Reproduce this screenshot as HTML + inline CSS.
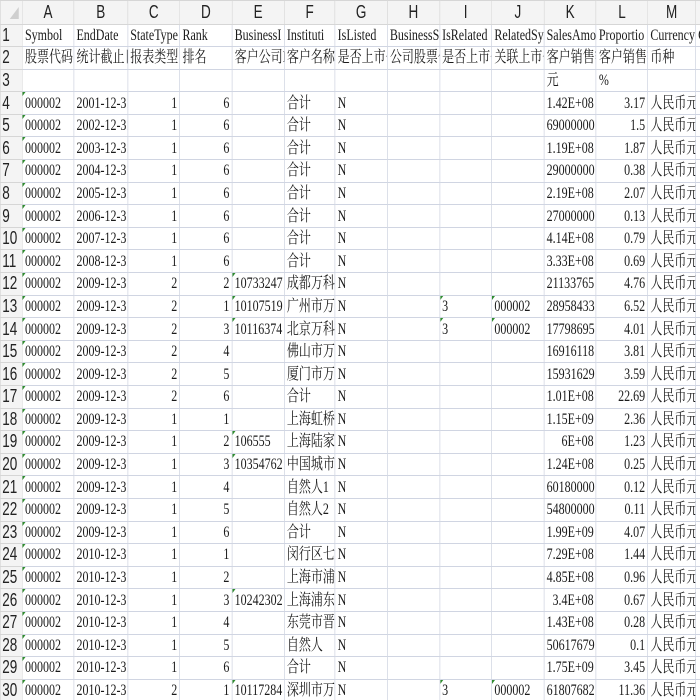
<!DOCTYPE html>
<html><head><meta charset="utf-8"><style>
html,body{margin:0;padding:0;background:#fff;width:700px;height:700px;overflow:hidden}
#w{width:940px;transform:scaleX(0.75);transform-origin:0 0}
table{border-collapse:collapse;table-layout:fixed;width:940px}
td{height:21.6px;padding:0 0 0 3px;border:1px solid #d0d5e2;white-space:nowrap;overflow:hidden;font-family:"Liberation Serif","Noto Serif CJK SC",serif;font-size:16px;line-height:21px;color:#1a1a1a;position:relative;vertical-align:middle}
td.r{text-align:right;padding:0 3px 0 0}
tr.h td{height:22.5px;background:#f4f4f4;border-color:#d6d6d6;text-align:center;font-family:"Liberation Sans","Noto Sans CJK SC",sans-serif;font-size:18px;color:#222;padding:0}
td.n{background:#f4f4f4;border-color:#d6d6d6;font-family:"Liberation Sans",sans-serif;font-size:18px;color:#222;padding:0 0 0 2px;text-align:left}
td.g::before{content:"";position:absolute;left:0;top:0;border-top:4px solid #2e8b2e;border-right:4px solid transparent}
.corner{position:absolute;left:12px;top:6px;width:0;height:0;border-left:12px solid transparent;border-bottom:12px solid #cfcfcf}
</style></head><body><div id="w"><table>
<colgroup><col style="width:29px"><col style="width:68px"><col style="width:71px"><col style="width:69px"><col style="width:69px"><col style="width:69px"><col style="width:67px"><col style="width:69px"><col style="width:69px"><col style="width:69px"><col style="width:69px"><col style="width:69px"><col style="width:68px"><col style="width:63px"><col style="width:12px"></colgroup>
<tr class="h"><td style="position:relative"><div class="corner"></div></td><td>A</td><td>B</td><td>C</td><td>D</td><td>E</td><td>F</td><td>G</td><td>H</td><td>I</td><td>J</td><td>K</td><td>L</td><td>M</td><td></td></tr>
<tr><td class="n">1</td><td>Symbol</td><td>EndDate</td><td>StateType</td><td>Rank</td><td>BusinessI</td><td>Instituti</td><td>IsListed</td><td>BusinessS</td><td>IsRelated</td><td>RelatedSy</td><td>SalesAmou</td><td>Proportio</td><td>CurrencyCo</td><td>Co</td></tr>
<tr><td class="n">2</td><td>股票代码</td><td>统计截止日</td><td>报表类型</td><td>排名</td><td>客户公司ID</td><td>客户名称</td><td>是否上市公</td><td>公司股票代</td><td>是否上市公</td><td>关联上市公</td><td>客户销售额</td><td>客户销售额</td><td>币种</td><td></td></tr>
<tr><td class="n">3</td><td></td><td></td><td></td><td></td><td></td><td></td><td></td><td></td><td></td><td></td><td>元</td><td>%</td><td></td><td></td></tr>
<tr><td class="n">4</td><td class="g">000002</td><td>2001-12-31</td><td class="r">1</td><td class="r">6</td><td></td><td>合计</td><td>N</td><td></td><td></td><td></td><td>1.42E+08</td><td class="r">3.17</td><td>人民币元</td><td></td></tr>
<tr><td class="n">5</td><td class="g">000002</td><td>2002-12-31</td><td class="r">1</td><td class="r">6</td><td></td><td>合计</td><td>N</td><td></td><td></td><td></td><td>69000000</td><td class="r">1.5</td><td>人民币元</td><td></td></tr>
<tr><td class="n">6</td><td class="g">000002</td><td>2003-12-31</td><td class="r">1</td><td class="r">6</td><td></td><td>合计</td><td>N</td><td></td><td></td><td></td><td>1.19E+08</td><td class="r">1.87</td><td>人民币元</td><td></td></tr>
<tr><td class="n">7</td><td class="g">000002</td><td>2004-12-31</td><td class="r">1</td><td class="r">6</td><td></td><td>合计</td><td>N</td><td></td><td></td><td></td><td>29000000</td><td class="r">0.38</td><td>人民币元</td><td></td></tr>
<tr><td class="n">8</td><td class="g">000002</td><td>2005-12-31</td><td class="r">1</td><td class="r">6</td><td></td><td>合计</td><td>N</td><td></td><td></td><td></td><td>2.19E+08</td><td class="r">2.07</td><td>人民币元</td><td></td></tr>
<tr><td class="n">9</td><td class="g">000002</td><td>2006-12-31</td><td class="r">1</td><td class="r">6</td><td></td><td>合计</td><td>N</td><td></td><td></td><td></td><td>27000000</td><td class="r">0.13</td><td>人民币元</td><td></td></tr>
<tr><td class="n">10</td><td class="g">000002</td><td>2007-12-31</td><td class="r">1</td><td class="r">6</td><td></td><td>合计</td><td>N</td><td></td><td></td><td></td><td>4.14E+08</td><td class="r">0.79</td><td>人民币元</td><td></td></tr>
<tr><td class="n">11</td><td class="g">000002</td><td>2008-12-31</td><td class="r">1</td><td class="r">6</td><td></td><td>合计</td><td>N</td><td></td><td></td><td></td><td>3.33E+08</td><td class="r">0.69</td><td>人民币元</td><td></td></tr>
<tr><td class="n">12</td><td class="g">000002</td><td>2009-12-31</td><td class="r">2</td><td class="r">2</td><td class="g">10733247</td><td>成都万科房</td><td>N</td><td></td><td></td><td></td><td>21133765</td><td class="r">4.76</td><td>人民币元</td><td></td></tr>
<tr><td class="n">13</td><td class="g">000002</td><td>2009-12-31</td><td class="r">2</td><td class="r">1</td><td class="g">10107519</td><td>广州市万科</td><td>N</td><td></td><td class="g">3</td><td class="g">000002</td><td>28958433</td><td class="r">6.52</td><td>人民币元</td><td></td></tr>
<tr><td class="n">14</td><td class="g">000002</td><td>2009-12-31</td><td class="r">2</td><td class="r">3</td><td class="g">10116374</td><td>北京万科企</td><td>N</td><td></td><td class="g">3</td><td class="g">000002</td><td>17798695</td><td class="r">4.01</td><td>人民币元</td><td></td></tr>
<tr><td class="n">15</td><td class="g">000002</td><td>2009-12-31</td><td class="r">2</td><td class="r">4</td><td></td><td>佛山市万科</td><td>N</td><td></td><td></td><td></td><td>16916118</td><td class="r">3.81</td><td>人民币元</td><td></td></tr>
<tr><td class="n">16</td><td class="g">000002</td><td>2009-12-31</td><td class="r">2</td><td class="r">5</td><td></td><td>厦门市万科</td><td>N</td><td></td><td></td><td></td><td>15931629</td><td class="r">3.59</td><td>人民币元</td><td></td></tr>
<tr><td class="n">17</td><td class="g">000002</td><td>2009-12-31</td><td class="r">2</td><td class="r">6</td><td></td><td>合计</td><td>N</td><td></td><td></td><td></td><td>1.01E+08</td><td class="r">22.69</td><td>人民币元</td><td></td></tr>
<tr><td class="n">18</td><td class="g">000002</td><td>2009-12-31</td><td class="r">1</td><td class="r">1</td><td></td><td>上海虹桥经</td><td>N</td><td></td><td></td><td></td><td>1.15E+09</td><td class="r">2.36</td><td>人民币元</td><td></td></tr>
<tr><td class="n">19</td><td class="g">000002</td><td>2009-12-31</td><td class="r">1</td><td class="r">2</td><td class="g">106555</td><td>上海陆家嘴</td><td>N</td><td></td><td></td><td></td><td class="r">6E+08</td><td class="r">1.23</td><td>人民币元</td><td></td></tr>
<tr><td class="n">20</td><td class="g">000002</td><td>2009-12-31</td><td class="r">1</td><td class="r">3</td><td class="g">10354762</td><td>中国城市建</td><td>N</td><td></td><td></td><td></td><td>1.24E+08</td><td class="r">0.25</td><td>人民币元</td><td></td></tr>
<tr><td class="n">21</td><td class="g">000002</td><td>2009-12-31</td><td class="r">1</td><td class="r">4</td><td></td><td>自然人1</td><td>N</td><td></td><td></td><td></td><td>60180000</td><td class="r">0.12</td><td>人民币元</td><td></td></tr>
<tr><td class="n">22</td><td class="g">000002</td><td>2009-12-31</td><td class="r">1</td><td class="r">5</td><td></td><td>自然人2</td><td>N</td><td></td><td></td><td></td><td>54800000</td><td class="r">0.11</td><td>人民币元</td><td></td></tr>
<tr><td class="n">23</td><td class="g">000002</td><td>2009-12-31</td><td class="r">1</td><td class="r">6</td><td></td><td>合计</td><td>N</td><td></td><td></td><td></td><td>1.99E+09</td><td class="r">4.07</td><td>人民币元</td><td></td></tr>
<tr><td class="n">24</td><td class="g">000002</td><td>2010-12-31</td><td class="r">1</td><td class="r">1</td><td></td><td>闵行区七宝</td><td>N</td><td></td><td></td><td></td><td>7.29E+08</td><td class="r">1.44</td><td>人民币元</td><td></td></tr>
<tr><td class="n">25</td><td class="g">000002</td><td>2010-12-31</td><td class="r">1</td><td class="r">2</td><td></td><td>上海市浦东</td><td>N</td><td></td><td></td><td></td><td>4.85E+08</td><td class="r">0.96</td><td>人民币元</td><td></td></tr>
<tr><td class="n">26</td><td class="g">000002</td><td>2010-12-31</td><td class="r">1</td><td class="r">3</td><td class="g">10242302</td><td>上海浦东新</td><td>N</td><td></td><td></td><td></td><td class="r">3.4E+08</td><td class="r">0.67</td><td>人民币元</td><td></td></tr>
<tr><td class="n">27</td><td class="g">000002</td><td>2010-12-31</td><td class="r">1</td><td class="r">4</td><td></td><td>东莞市晋杰</td><td>N</td><td></td><td></td><td></td><td>1.43E+08</td><td class="r">0.28</td><td>人民币元</td><td></td></tr>
<tr><td class="n">28</td><td class="g">000002</td><td>2010-12-31</td><td class="r">1</td><td class="r">5</td><td></td><td>自然人</td><td>N</td><td></td><td></td><td></td><td>50617679</td><td class="r">0.1</td><td>人民币元</td><td></td></tr>
<tr><td class="n">29</td><td class="g">000002</td><td>2010-12-31</td><td class="r">1</td><td class="r">6</td><td></td><td>合计</td><td>N</td><td></td><td></td><td></td><td>1.75E+09</td><td class="r">3.45</td><td>人民币元</td><td></td></tr>
<tr><td class="n">30</td><td class="g">000002</td><td>2010-12-31</td><td class="r">2</td><td class="r">1</td><td class="g">10117284</td><td>深圳市万科</td><td>N</td><td></td><td class="g">3</td><td class="g">000002</td><td>61807682</td><td class="r">11.36</td><td>人民币元</td><td></td></tr>
</table></div></body></html>
